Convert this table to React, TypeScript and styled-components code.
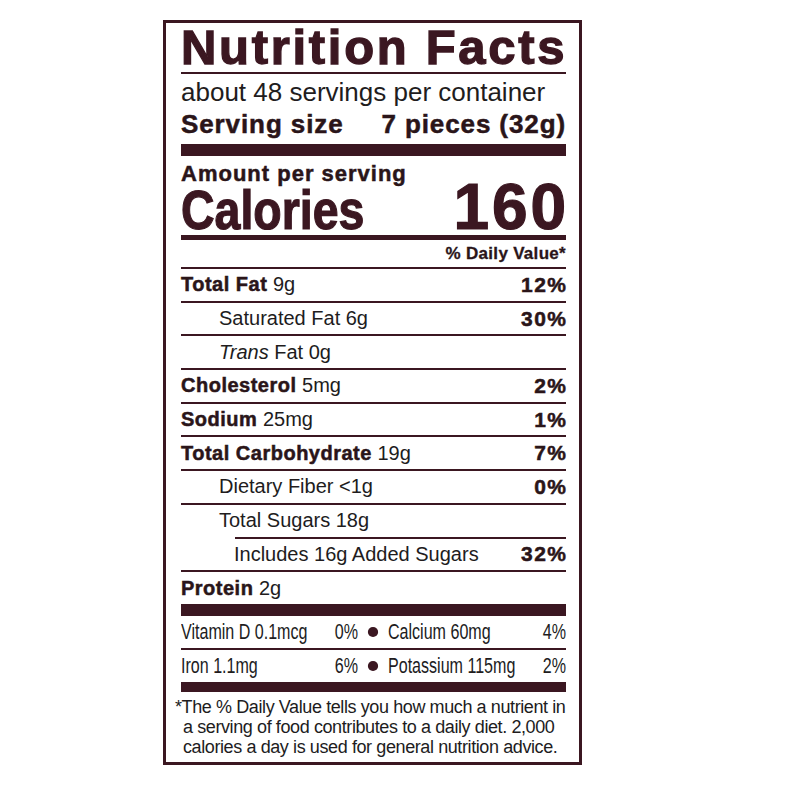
import React from "react";
import styled, { createGlobalStyle } from "styled-components";

const MAROON = "#3b1721";
const INK = "#2a1519";
const TEXT = "#211c1d";

const MINERAL_SCALE = 0.73;

const GlobalStyle = createGlobalStyle`
  html, body { margin: 0; padding: 0; background: #ffffff; }
  body { font-family: "Liberation Sans", Arial, Helvetica, sans-serif; }
`;

const Page = styled.div`
  padding: 20px 0 0 163px;
`;

const Label = styled.section`
  box-sizing: border-box;
  width: 419px;
  border: 3px solid ${MAROON};
  padding: 0 13px 0 15px;
  color: ${TEXT};
`;

const Title = styled.h1`
  margin: 0;
  font-size: 49px;
  line-height: 49px;
  font-weight: 700;
  letter-spacing: 2.7px;
  color: ${MAROON};
  -webkit-text-stroke: 1.3px ${MAROON};
  white-space: nowrap;
`;

const Rule = styled.div<{ $h: number; $inset?: number }>`
  height: ${(p) => p.$h}px;
  margin-left: ${(p) => p.$inset ?? 0}px;
  background: ${MAROON};
`;

const Servings = styled.p`
  margin: 0;
  padding-top: 3px;
  font-size: 26px;
  line-height: 31px;
  white-space: nowrap;
`;

const ServingSize = styled.div`
  display: flex;
  justify-content: space-between;
  margin-bottom: 4px;
  font-size: 26px;
  line-height: 32px;
  font-weight: 700;
  letter-spacing: 0.9px;
  color: ${INK};
  -webkit-text-stroke: 0.5px ${INK};
  white-space: nowrap;
`;

const AmountPer = styled.div`
  margin-top: 5px;
  font-size: 22px;
  line-height: 26px;
  font-weight: 700;
  letter-spacing: 1px;
  color: ${INK};
  -webkit-text-stroke: 0.5px ${INK};
`;

const CaloriesRow = styled.div`
  display: flex;
  justify-content: space-between;
  align-items: baseline;
  height: 43px;
  margin-bottom: 5px;
  color: ${MAROON};
  font-weight: 700;
`;

const CaloriesWord = styled.span`
  display: inline-block;
  font-size: 56px;
  line-height: 40px;
  transform: scaleX(0.83);
  transform-origin: left center;
  -webkit-text-stroke: 1.2px ${MAROON};
`;

const CaloriesValue = styled.span`
  font-size: 64px;
  line-height: 40px;
  letter-spacing: 2.8px;
  margin-right: -2.8px;
  -webkit-text-stroke: 1.2px ${MAROON};
`;

const DailyValue = styled.div`
  height: 27px;
  text-align: right;
  font-size: 17px;
  line-height: 27px;
  font-weight: 700;
  letter-spacing: 0.3px;
  color: ${INK};
  -webkit-text-stroke: 0.3px ${INK};
`;

const Row = styled.div<{ $indent?: number }>`
  display: flex;
  justify-content: space-between;
  align-items: center;
  height: 31.7px;
  padding-left: ${(p) => p.$indent ?? 0}px;
  font-size: 20px;
  white-space: nowrap;
`;

const Nutrient = styled.span`
  font-weight: 700;
  letter-spacing: 0.5px;
  color: ${INK};
  -webkit-text-stroke: 0.5px ${INK};
`;

const Pct = styled.span`
  font-weight: 700;
  font-size: 21px;
  letter-spacing: 1.5px;
  margin-right: -1.5px;
  color: ${INK};
  -webkit-text-stroke: 0.5px ${INK};
`;

/* The vitamin rows use a condensed face: laid out wide, then squeezed. */
const MineralRow = styled.div`
  display: grid;
  grid-template-columns: ${177 / MINERAL_SCALE}px ${30 / MINERAL_SCALE}px 1fr;
  align-items: center;
  width: ${385 / MINERAL_SCALE}px;
  height: 32px;
  transform: scaleX(${MINERAL_SCALE});
  transform-origin: left center;
  font-size: 22px;
  color: ${TEXT};
`;

const MineralCell = styled.div`
  display: flex;
  justify-content: space-between;
  white-space: nowrap;
`;

const Dot = styled.span`
  justify-self: center;
  width: ${10 / MINERAL_SCALE}px;
  height: 10px;
  border-radius: 50%;
  background: ${MAROON};
`;

const Footnote = styled.p`
  margin: 0;
  padding: 5px 0 5px 2px;
  text-indent: -8px;
  font-size: 18px;
  line-height: 20px;
  letter-spacing: -0.4px;
  white-space: nowrap;
  color: ${TEXT};
`;

type NutrientRow = {
  label: React.ReactNode;
  pct?: string;
  indent?: number;
  ruleInset?: number;
};

const rows: NutrientRow[] = [
  { label: <><Nutrient>Total Fat</Nutrient> 9g</>, pct: "12%" },
  { label: "Saturated Fat 6g", pct: "30%", indent: 38 },
  { label: <><em>Trans</em> Fat 0g</>, indent: 38 },
  { label: <><Nutrient>Cholesterol</Nutrient> 5mg</>, pct: "2%" },
  { label: <><Nutrient>Sodium</Nutrient> 25mg</>, pct: "1%" },
  { label: <><Nutrient>Total Carbohydrate</Nutrient> 19g</>, pct: "7%" },
  { label: "Dietary Fiber <1g", pct: "0%", indent: 38 },
  { label: "Total Sugars 18g", indent: 38 },
  { label: "Includes 16g Added Sugars", pct: "32%", indent: 53, ruleInset: 54 },
  { label: <><Nutrient>Protein</Nutrient> 2g</> },
];

const minerals = [
  ["Vitamin D 0.1mcg", "0%", "Calcium 60mg", "4%"],
  ["Iron 1.1mg", "6%", "Potassium 115mg", "2%"],
];

export default function App() {
  return (
    <Page>
      <GlobalStyle />
      <Label>
        <Title>Nutrition Facts</Title>
        <Rule $h={2} />
        <Servings>about 48 servings per container</Servings>
        <ServingSize>
          <span>Serving size</span>
          <span>7 pieces (32g)</span>
        </ServingSize>
        <Rule $h={12} />
        <AmountPer>Amount per serving</AmountPer>
        <CaloriesRow>
          <CaloriesWord>Calories</CaloriesWord>
          <CaloriesValue>160</CaloriesValue>
        </CaloriesRow>
        <Rule $h={5} />
        <DailyValue>% Daily Value*</DailyValue>
        <Rule $h={2} />
        {rows.map((r, i) => (
          <React.Fragment key={i}>
            {i > 0 && <Rule $h={2} $inset={r.ruleInset} />}
            <Row $indent={r.indent}>
              <span>{r.label}</span>
              {r.pct && <Pct>{r.pct}</Pct>}
            </Row>
          </React.Fragment>
        ))}
        <Rule $h={12} />
        {minerals.map((m, i) => (
          <React.Fragment key={i}>
            {i > 0 && <Rule $h={2} />}
            <MineralRow>
              <MineralCell>
                <span>{m[0]}</span>
                <span>{m[1]}</span>
              </MineralCell>
              <Dot />
              <MineralCell>
                <span>{m[2]}</span>
                <span>{m[3]}</span>
              </MineralCell>
            </MineralRow>
          </React.Fragment>
        ))}
        <Rule $h={10} />
        <Footnote>
          *The % Daily Value tells you how much a nutrient in
          <br />
          a serving of food contributes to a daily diet. 2,000
          <br />
          calories a day is used for general nutrition advice.
        </Footnote>
      </Label>
    </Page>
  );
}
